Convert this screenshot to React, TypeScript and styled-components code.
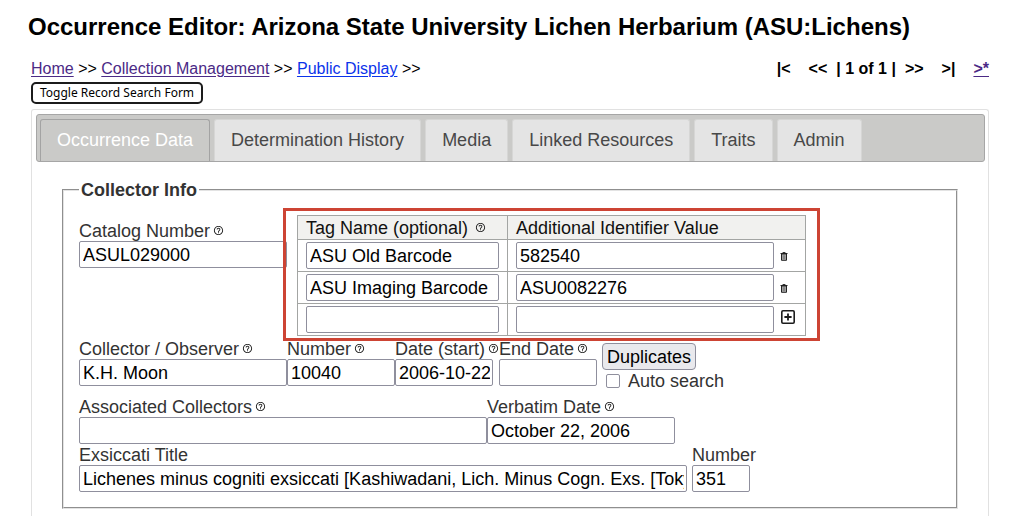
import React, { useId, useState } from "react";
import styled, { createGlobalStyle } from "styled-components";

const GlobalStyle = createGlobalStyle`
  *, *::before, *::after { box-sizing: border-box; }
  body {
    margin: 0;
    background: #fff;
    color: #000;
    font-family: "Liberation Sans", Arial, sans-serif;
    font-size: 16px;
  }
`;

const Page = styled.div`
  display: flex;
  flex-direction: column;
  min-height: 100vh;
  padding: 12px 33px 0 31px;
`;

const Title = styled.h1`
  margin: 0 0 16px -3px;
  font-size: 24px;
  line-height: 30px;
  font-weight: bold;
`;

const TopNav = styled.div`
  display: flex;
  justify-content: space-between;
  line-height: 22px;
  margin-bottom: 2px;
`;

const NavLink = styled.a<{ $visited?: boolean }>`
  color: ${(p) => (p.$visited ? "#4b2a86" : "#0b33ea")};
  text-decoration: underline;
  text-underline-offset: 2px;
`;

const Pager = styled.nav`
  display: flex;
  gap: 18px;
  font-weight: bold;
`;

const PagerCenter = styled.span`
  display: flex;
  gap: 9px;
`;

const ToggleButton = styled.button`
  align-self: flex-start;
  height: 22px;
  padding: 0 7px;
  margin-bottom: 5px;
  border: 2px solid #1b1b1b;
  border-radius: 5px;
  background: #fff;
  color: #000;
  font: 12px/16px "Noto Sans", "Open Sans", sans-serif;
`;

const Panel = styled.main`
  flex: 1;
  padding: 4px 3px 0 4px;
  border: 1px solid #e1e1e1;
  border-bottom: 0;
  border-radius: 3px 3px 0 0;
`;

const TabBar = styled.div`
  display: flex;
  gap: 4px;
  height: 48px;
  padding: 4px 3px 0;
  border: 1px solid #a6a6a6;
  border-radius: 3px;
  background: #cacac8;
`;

const Tab = styled.button<{ $active: boolean }>`
  padding: 0 16px 2px;
  border: 1px solid ${(p) => (p.$active ? "#a3a3a3" : "#d6d6d5")};
  border-bottom: 0;
  border-radius: 3px 3px 0 0;
  background: ${(p) => (p.$active ? "#cacac8" : "#e4e4e4")};
  color: ${(p) => (p.$active ? "#fff" : "#484848")};
  font: 18px/22px "Liberation Sans", Arial, sans-serif;
  white-space: nowrap;
`;

const Fieldset = styled.fieldset`
  margin: 18px 27px 0 26px;
  padding: 15px;
  border: 2px groove #e3e3e3;
  color: #333;
  font-size: 18px;
`;

const Legend = styled.legend`
  padding: 0 2px;
  line-height: 20px;
  font-weight: bold;
`;

const Row = styled.div<{ $gap?: number; $after?: number }>`
  display: flex;
  align-items: flex-start;
  gap: ${(p) => p.$gap ?? 0}px;
  margin-bottom: ${(p) => p.$after ?? 0}px;
`;

const FieldBox = styled.div<{ $width: number }>`
  flex: 0 1 ${(p) => p.$width}px;
  min-width: 0;
`;

const CatalogBox = styled(FieldBox)`
  margin: 7px 10px 0 0;
`;

const LabelLine = styled.div`
  display: flex;
  align-items: center;
  gap: 4px;
  height: 19px;
  line-height: 19px;
  white-space: nowrap;
`;

const TextInput = styled.input`
  display: block;
  width: 100%;
  height: 27px;
  padding: 2px 2px 0 3px;
  border: 1px solid #8f8f9d;
  border-radius: 2px;
  background: #fff;
  color: #000;
  font: 18px/22px "Liberation Sans", Arial, sans-serif;
`;

const HelpSvg = styled.svg`
  flex: none;
  width: 11px;
  height: 11px;
  margin: 0 -1px 2px;
  fill: #222;
`;

const Highlight = styled.div`
  position: relative;
  &::after {
    content: "";
    position: absolute;
    inset: -7px -14px -5px;
    border: 3px solid #cd4434;
    pointer-events: none;
  }
`;

const IdTable = styled.table`
  border-collapse: collapse;
  border: 1px solid #a3a5a3;
  color: #111;
`;

const HeadCell = styled.th`
  height: 24px;
  padding: 1px 8px 0;
  border: 1px solid #a3a5a3;
  background: #f1f1ef;
  font-weight: normal;
  text-align: left;
  line-height: 22px;
`;

const HeadLine = styled.div`
  display: flex;
  align-items: center;
  gap: 8px;
`;

const Cell = styled.td`
  padding: 2px 8px;
  border: 1px solid #a3a5a3;
`;

const TagLine = styled.div`
  width: 193px;
`;

const ValueLine = styled.div`
  display: grid;
  grid-template-columns: 258px auto;
  align-items: center;
  justify-content: start;
  column-gap: 6px;
  width: 281px;
`;

const IconButton = styled.button`
  display: flex;
  padding: 2px 0 0;
  border: 0;
  background: none;
`;

const AddButton = styled(IconButton)`
  padding: 0 0 5px 1px;
`;

const DuplicatesColumn = styled.div`
  margin: 3px 0 0 5px;
`;

const DuplicatesButton = styled.button`
  display: block;
  height: 27px;
  padding: 0 4px;
  border: 1px solid #8f8f9d;
  border-radius: 4px;
  background: #e9e9ed;
  color: #000;
  font: 18px/22px "Liberation Sans", Arial, sans-serif;
`;

const CheckLabel = styled.label`
  display: flex;
  align-items: center;
  gap: 8px;
  height: 22px;
  padding-left: 4px;
  white-space: nowrap;
`;

const CheckBox = styled.input`
  appearance: none;
  width: 14px;
  height: 14px;
  margin: 0;
  border: 1px solid #8f8f9d;
  border-radius: 2px;
  background: #fff;
  &:checked { background: #0060df; }
`;

const HelpIcon = () => (
  <HelpSvg viewBox="0 0 24 24" role="img" aria-label="Help">
    <path d="M11 18h2v-2h-2v2zm1-16C6.48 2 2 6.48 2 12s4.48 10 10 10 10-4.48 10-10S17.52 2 12 2zm0 18c-4.41 0-8-3.59-8-8s3.59-8 8-8 8 3.59 8 8-3.59 8-8 8zm0-14c-2.21 0-4 1.79-4 4h2c0-1.1.9-2 2-2s2 .9 2 2c0 2-3 1.75-3 5h2c0-2.25 3-2.5 3-5 0-2.21-1.79-4-4-4z" />
  </HelpSvg>
);

const TrashIcon = () => (
  <svg width="8" height="9" viewBox="0 0 8 9" fill="none" stroke="#222">
    <path d="M1.5 2v6.3h5V2z" fill="#b5b5b5" />
    <path d="M0.5 1.5h7M2.6 0.6h2.8" />
    <path d="M3.2 3.2v4M4.8 3.2v4" strokeWidth="0.7" stroke="#555" />
  </svg>
);

const AddIcon = () => (
  <svg width="14" height="14" viewBox="0 0 14 14" fill="none" stroke="#1c1c1c">
    <rect x="0.8" y="0.8" width="12.4" height="12.4" rx="1.2" strokeWidth="1.6" />
    <path d="M7 3.4v7.2M3.4 7h7.2" strokeWidth="1.8" />
  </svg>
);

type FieldProps = { label: string; value?: string; width: number; help?: boolean; as?: typeof CatalogBox };

const Field = ({ label, value = "", width, help, as: Box = FieldBox }: FieldProps) => {
  const id = useId();
  return (
    <Box $width={width}>
      <LabelLine>
        <label htmlFor={id}>{label}</label>
        {help && <HelpIcon />}
      </LabelLine>
      <TextInput id={id} type="text" defaultValue={value} />
    </Box>
  );
};

const tabs = ["Occurrence Data", "Determination History", "Media", "Linked Resources", "Traits", "Admin"];

const identifiers = [
  { tag: "ASU Old Barcode", value: "582540" },
  { tag: "ASU Imaging Barcode", value: "ASU0082276" },
  { tag: "", value: "" },
];

export default function App() {
  const [active, setActive] = useState(0);
  return (
    <>
      <GlobalStyle />
      <Page>
        <Title>Occurrence Editor: Arizona State University Lichen Herbarium (ASU:Lichens)</Title>
        <TopNav>
          <nav>
            <NavLink href="#home" $visited>Home</NavLink> &gt;&gt;{" "}
            <NavLink href="#management" $visited>Collection Management</NavLink> &gt;&gt;{" "}
            <NavLink href="#display">Public Display</NavLink> &gt;&gt;
          </nav>
          <Pager>
            <span>|&lt;</span>
            <PagerCenter>
              <span>&lt;&lt;</span>
              <span>| 1 of 1 |</span>
              <span>&gt;&gt;</span>
            </PagerCenter>
            <span>&gt;|</span>
            <NavLink href="#new" $visited>&gt;*</NavLink>
          </Pager>
        </TopNav>
        <ToggleButton type="button">Toggle Record Search Form</ToggleButton>
        <Panel>
          <TabBar role="tablist">
            {tabs.map((name, i) => (
              <Tab key={name} type="button" role="tab" aria-selected={i === active} $active={i === active} onClick={() => setActive(i)}>
                {name}
              </Tab>
            ))}
          </TabBar>
          <Fieldset>
            <Legend>Collector Info</Legend>
            <Row $after={4}>
              <Field as={CatalogBox} label="Catalog Number" value="ASUL029000" width={208} help />
              <Highlight>
                <IdTable>
                  <thead>
                    <tr>
                      <HeadCell scope="col">
                        <HeadLine>Tag Name (optional) <HelpIcon /></HeadLine>
                      </HeadCell>
                      <HeadCell scope="col">Additional Identifier Value</HeadCell>
                    </tr>
                  </thead>
                  <tbody>
                    {identifiers.map(({ tag, value }, i) => (
                      <tr key={i}>
                        <Cell>
                          <TagLine>
                            <TextInput type="text" aria-label="Tag name" defaultValue={tag} />
                          </TagLine>
                        </Cell>
                        <Cell>
                          <ValueLine>
                            <TextInput type="text" aria-label="Identifier value" defaultValue={value} />
                            {tag ? (
                              <IconButton type="button" aria-label="Delete identifier"><TrashIcon /></IconButton>
                            ) : (
                              <AddButton type="button" aria-label="Add identifier"><AddIcon /></AddButton>
                            )}
                          </ValueLine>
                        </Cell>
                      </tr>
                    ))}
                  </tbody>
                </IdTable>
              </Highlight>
            </Row>
            <Row $after={6}>
              <Field label="Collector / Observer" value="K.H. Moon" width={208} help />
              <Field label="Number" value="10040" width={108} help />
              <Row $gap={6}>
                <Field label="Date (start)" value="2006-10-22" width={98} help />
                <Field label="End Date" width={98} help />
              </Row>
              <DuplicatesColumn>
                <DuplicatesButton type="button">Duplicates</DuplicatesButton>
                <CheckLabel>
                  <CheckBox type="checkbox" /> Auto search
                </CheckLabel>
              </DuplicatesColumn>
            </Row>
            <Row $after={2}>
              <Field label="Associated Collectors" width={408} help />
              <Field label="Verbatim Date" value="October 22, 2006" width={188} help />
            </Row>
            <Row $gap={5}>
              <Field
                label="Exsiccati Title"
                value="Lichenes minus cogniti exsiccati [Kashiwadani, Lich. Minus Cogn. Exs. [Tokyo]"
                width={608}
              />
              <Field label="Number" value="351" width={58} />
            </Row>
          </Fieldset>
        </Panel>
      </Page>
    </>
  );
}
